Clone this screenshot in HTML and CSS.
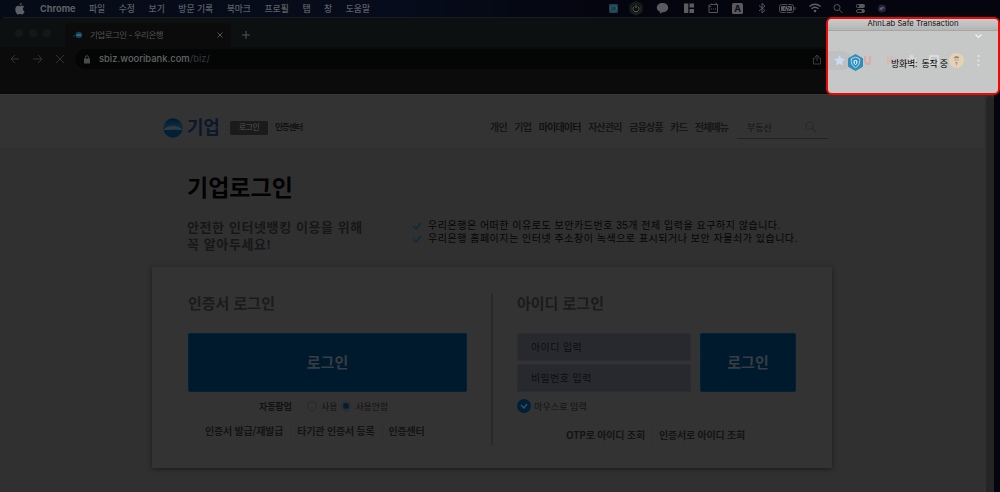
FILE: index.html
```html
<!DOCTYPE html>
<html lang="ko">
<head>
    <meta charset="UTF-8">
    <meta name="viewport" content="width=device-width, initial-scale=1.0">
    <title>기업로그인 - 우리은행</title>
    <link rel="stylesheet" href="styles.css">
</head>
<body>
    <div class="menubar">
        <svg class="apple" width="10" height="12" viewBox="0 0 10 12"><path d="M6.8 0C6.9 1.4 5.8 2.5 4.8 2.5 4.7 1.2 5.7.2 6.8 0ZM5 3.3C5.5 3.3 6.1 2.7 7.1 2.7 8 2.7 8.8 3.1 9.2 3.8 7.2 5 7.6 7.6 9.6 8.4 9 9.9 8.1 11.3 7.2 11.4 6.3 11.4 6 10.9 5 10.9 4 10.9 3.7 11.4 2.9 11.4 1.8 11.4.3 8.9.3 6.5.3 4.1 1.7 2.8 3.1 2.8 4 2.8 4.6 3.3 5 3.3Z"/></svg>
        <b>Chrome</b>
        <span>파일</span>
        <span>수정</span>
        <span>보기</span>
        <span>방문 기록</span>
        <span>북마크</span>
        <span>프로필</span>
        <span>탭</span>
        <span>창</span>
        <span>도움말</span>
        <svg class="status" width="288" height="17" viewBox="604 0 288 17">
            <rect x="609" y="4" width="9" height="9" rx="1" fill="#174050"/>
            <path d="M613.500 5.500l3 1v2.500q0 2-3 3-3-1-3-3V6.500z" fill="none" stroke="#3c5961"/>
            <path d="M636 1.500l6 3.400v6.800l-6 3.400-6-3.400V4.900z" fill="#080a0a" stroke="#252423"/>
            <circle cx="636" cy="8.500" r="4.800" fill="none" stroke="#26382b" stroke-width=".8"/>
            <path d="M634.300 6.300a3 3 0 1 0 3.400 0M636 4.800v3.500" fill="none" stroke="#656565"/>
            <path d="M662.500 3c3.300 0 5.700 2 5.700 4.700s-2.400 4.500-5.700 4.500l-2.800 1.500.3-2c-2-.8-3.200-2.200-3.200-4C656.800 5 659.200 3 662.500 3z"/>
            <path d="M684 3.500h4.300V13H684zM689.500 3.500h4.500v4h-4.500zM689.500 9h4.500v4h-4.500z"/>
            <path d="M711 4.500h6.500v8H709v-7m0 0l2-2m-2 2l2 1.500M715.500 3l2 1.500v2M711 9h1m1 0h1m1 0h1" fill="none" stroke="#565656"/>
            <rect x="732" y="3" width="11" height="11" rx="1.500"/>
            <text x="737.500" y="12" text-anchor="middle">A</text>
            <path d="M759 5.500l6 5-3 2.500V3.500l3 2.500-6 5" fill="none" stroke="#555560"/>
            <rect x="779.500" y="4.500" width="14" height="8" rx="2" fill="none" stroke="#4d4d52"/>
            <rect x="781" y="6" width="11" height="5" rx="1"/><path d="M795 7v3" stroke="#555"/>
            <path d="M788 4l-4 5h3l-1 4 4-5h-3z" fill="#888" stroke="#070711" stroke-width=".8"/>
            <path d="M809.500 6.500q5.500-4.500 11 0M811.500 8.700q3.500-3 7 0" fill="none" stroke="#606068" stroke-width="1.500"/><circle cx="815" cy="11" r="1.300"/>
            <circle cx="837" cy="7.500" r="3" fill="none" stroke="#55555a"/><path d="M839.500 10l3 3" stroke="#55555a"/>
            <rect x="856" y="4" width="9" height="4" rx="2"/><circle cx="858" cy="6" r="1.200" fill="#080811"/><rect x="856.500" y="9.500" width="8" height="3" rx="1.500" fill="none" stroke="#55555a"/><circle cx="863" cy="11" r="1.500"/>
            <circle cx="882" cy="8.500" r="4" fill="#252238"/><path d="M879 9.500q3-5 6-1-3-1-3 2z" fill="#66566b"/>
        </svg>
    </div>
    <div class="window">
        <div class="tabs">
            <div class="lights"><i></i><i></i><i></i></div>
            <div class="tab">
                <svg width="10" height="8" viewBox="0 0 10 8"><circle cx="5.800" cy="4" r="3.200" fill="#0a4263"/><path d="M2.800 4q3-2 6.200 0l-1 1H3.500z" fill="#52606a"/><circle cx="1.200" cy="5" r="1" fill="#063351"/></svg>
                <span>기업로그인 - 우리은행</span>
                <svg width="6" height="6" viewBox="0 0 6 6"><path d="M.5.5l5 5m0-5l-5 5" stroke="#555" fill="none"/></svg>
            </div>
            <svg class="plus" width="8" height="8" viewBox="0 0 8 8"><path d="M4 0v8M0 4h8" stroke="#555"/></svg>
        </div>
        <div class="toolbar">
            <svg width="60" height="12" viewBox="0 0 60 12"><path d="M9 6H1m4-4L1 6l4 4M23 6h9m-4-4l4 4-4 4M46 2l8 8m0-8l-8 8" stroke="#323434" fill="none"/></svg>
            <div class="address">
                <svg width="6" height="9" viewBox="0 0 6 9"><rect y="3.500" width="6" height="5" rx=".5" fill="#484b4b"/><path d="M1.300 4V2.500q0-1.700 1.700-1.700t1.700 1.700V4" fill="none" stroke="#484b4b"/></svg>
                <p>sbiz.wooribank.com<span>/biz/</span></p>
                <svg class="share" width="8" height="11" viewBox="0 0 8 11"><path d="M2.500 4H.5v6h7V4h-2M4 7V1M2 3l2-2 2 2" fill="none" stroke="#3a3a3a"/></svg>
            </div>
        </div>
        <div class="page">
            <header>
                <svg class="logo" width="20" height="20" viewBox="0 0 20 20">
                    <defs><linearGradient id="sky" x2="0" y2="1"><stop offset="0" stop-color="#001a30"/><stop offset=".4" stop-color="#0a2c40"/><stop offset=".6" stop-color="#00233a"/><stop offset="1" stop-color="#001f33"/></linearGradient></defs>
                    <circle cx="10" cy="10" r="9.700" fill="url(#sky)"/>
                    <path d="M.4 12Q3 8 10 8T19.600 12Q16 11.500 10 11.700T.4 12Z" fill="#343a3e"/>
                </svg>
                <h2>기업</h2>
                <span class="badge">로그인</span>
                <span class="center">인증센터</span>
                <nav>
                    <span>개인</span><span>기업</span><span class="strong">마이데이터</span><span>자산관리</span><span>금융상품</span><span>카드</span><span>전체메뉴</span>
                </nav>
                <div class="search">
                    <span>부동산</span>
                    <svg width="12" height="12" viewBox="0 0 12 12"><circle cx="4.500" cy="4.500" r="3.700" fill="none" stroke="#292929"/><path d="M7.300 7.300l4 4" stroke="#292929" stroke-width="1.500"/></svg>
                </div>
            </header>
            <main>
                <h1>기업로그인</h1>
                <div class="notice">
                    <h3>안전한 인터넷뱅킹 이용을 위해<br>꼭 알아두세요!</h3>
                    <ul>
                        <li><svg width="10" height="8" viewBox="0 0 10 8"><path d="M1 4l3 3 5-6"/></svg>우리은행은 어떠한 이유로도 보안카드번호 35개 전체 입력을 요구하지 않습니다.</li>
                        <li><svg width="10" height="8" viewBox="0 0 10 8"><path d="M1 4l3 3 5-6"/></svg>우리은행 홈페이지는 인터넷 주소창이 녹색으로 표시되거나 보안 자물쇠가 있습니다.</li>
                    </ul>
                </div>
                <div class="card">
                    <section class="cert">
                        <h4>인증서 로그인</h4>
                        <div class="btn">로그인</div>
                        <div class="popup-opt">
                            <b>자동팝업</b>
                            <i class="radio"></i><span>사용</span>
                            <i class="radio on"></i><span>사용안함</span>
                        </div>
                        <div class="links"><span>인증서 발급/재발급</span><span>타기관 인증서 등록</span><span>인증센터</span></div>
                    </section>
                    <section class="idlogin">
                        <h4>아이디 로그인</h4>
                        <div class="form">
                            <div class="fields">
                                <div class="field">아이디 입력</div>
                                <div class="field">비밀번호 입력</div>
                            </div>
                            <div class="btn">로그인</div>
                        </div>
                        <div class="mouse">
                            <svg width="14" height="14" viewBox="0 0 14 14"><circle cx="7" cy="7" r="7" fill="#001f38"/><path d="M4 6l3 3 3-4" fill="none" stroke="#465059" stroke-width="1.300"/></svg>
                            마우스로 입력
                        </div>
                        <div class="links"><span>OTP로 아이디 조회</span><span>인증서로 아이디 조회</span></div>
                    </section>
                </div>
            </main>
            <div class="scrollbar"></div>
        </div>
    </div>
    <div class="ahnlab">
        <div class="title">AhnLab Safe Transaction</div>
        <div class="body">
            <svg class="ghost" width="168" height="62" viewBox="828 30 168 62">
                <path d="M828 50h14a9 9 0 0 1 0 19h-14z" fill="#bfc0c0"/>
                <path d="M975.500 33.500l3 3 3-3" fill="none" stroke="#f2f2f2" stroke-width="1.200"/>
                <path d="M839.500 54l1.600 3.600 4 .4-3 2.600.9 3.900-3.500-2-3.500 2 .9-3.900-3-2.600 4-.4z" fill="#ccdaf3"/>
                <path d="M865 55v5q0 3 2.500 3t2.500-3v-5" fill="none" stroke="#dfa8a4" stroke-width="1.800"/>
                <path d="M888 55v8m5-8l-4 4 4 4" fill="none" stroke="#dcb6b2" stroke-width="1.500"/>
                <path d="M907 57h3a2 2 0 1 1 3 0h3v7h-9z" fill="#d8d9d9"/>
                <rect x="930" y="55" width="8" height="8" fill="none" stroke="#dadbdb" stroke-width="2"/>
                <circle cx="956.500" cy="59.500" r="7.500" fill="#e5d2b4"/>
                <circle cx="956.500" cy="58" r="2.500" fill="#d7b99c"/><path d="M953.500 57q3-4 6 0z" fill="#898b89"/><path d="M955 61h3l-1.500 4z" fill="#a6a8a6"/>
                <path d="M978.500 54v2m0 2.500v2m0 2.500v2" stroke="#e8e8e8" stroke-width="1.600"/>
            </svg>
            <svg class="shield" width="17" height="17" viewBox="0 0 16 17">
                <path d="M8 .5l7 4v8l-7 4-7-4v-8z" fill="#2d8ebb" stroke="#2d8ebb" stroke-linejoin="round"/>
                <path d="M8 3.200l4.200 1.500v3q0 4-4.200 6-4.200-2-4.200-6v-3z" fill="none" stroke="#b7d9e6"/>
                <path d="M8 5.700l2 .8v2Q10 10 8 11.200 6 10 6 8.500v-2z" fill="#c7dfe8"/><path d="M8 7v3" stroke="#2d8ebb"/>
            </svg>
            <span>방화벽:&nbsp; 동작 중</span>
        </div>
    </div>
</body>
</html>
```
FILE: styles.css
```css
*{
    margin: 0;
    padding: 0;
    box-sizing: border-box;
}
body{
    position: relative;
    width: 1000px;
    height: 492px;
    overflow: hidden;
    background-color: #05050e;
    font-family: "Liberation Sans", "Noto Sans CJK KR", sans-serif;
    color: #111;
}
svg{
    display: block;
    flex: none;
}
i{
    display: block;
}
.menubar{
    display: flex;
    align-items: center;
    height: 17px;
    padding-left: 15px;
    background-image: linear-gradient(to right, #050c17, #060c1b 40%, #05050f 60%);
    color: #5c6065;
    font: 500 8.8px/17px Inter, "Noto Sans CJK KR", sans-serif;
    white-space: nowrap;
}
.apple{
    fill: #5b6065;
    margin-right: 15px;
}
.menubar b{
    width: 49px;
    font-size: 9.2px;
}
.menubar span{
    margin-right: 13.6px;
}
.status{
    margin-left: auto;
    margin-right: 108px;
    fill: #5a5a5f;
}
.status text{
    font: bold 9px Inter, sans-serif;
    fill: #0b0b14;
}
.window{
    width: 994px;
    height: 475px;
    border-top: 1px solid #1a1c1d;
    border-radius: 5px 0 0 0;
    background-color: #0b0b0b;
    overflow: hidden;
}
.tabs{
    display: flex;
    align-items: center;
    height: 29px;
    padding-left: 15px;
    background-color: #0d1010;
}
.lights{
    display: flex;
    gap: 6px;
    width: 50px;
}
.lights i{
    width: 8px;
    height: 8px;
    border-radius: 50%;
    background-color: #151818;
}
.tab{
    display: flex;
    align-items: center;
    align-self: flex-end;
    width: 166px;
    height: 24px;
    padding: 0 8px 0 8px;
    border-radius: 5px 5px 0 0;
    background-color: #0b0b0b;
    color: #515353;
    font: 8.5px/20px Inter, "Noto Sans CJK KR", sans-serif;
    letter-spacing: -.5px;
}
.tab span{
    flex: 1;
    margin-left: 7px;
    white-space: nowrap;
}
.plus{
    margin: 5px 0 0 11px;
}
.toolbar{
    display: flex;
    align-items: center;
    height: 24px;
    padding-left: 10px;
}
.address{
    display: flex;
    align-items: center;
    width: 780px;
    height: 20px;
    margin-left: 5px;
    padding: 0 9px;
    border-radius: 10px;
    background-color: #040606;
    color: #626565;
    font: 500 9.4px/20px Inter, sans-serif;
}
.address p{
    flex: 1;
    margin-left: 9px;
}
.address p span{
    color: #303333;
}
.share{
    margin-right: 25px;
}
.page{
    display: grid;
    grid-template-columns: 984px 10px;
    grid-template-rows: 54px 1fr;
    height: 398px;
    margin-top: 23px;
    background-color: #303030;
    border-top: 1px solid #373737;
}
header{
    display: flex;
    align-items: center;
    padding: 12px 0 0 163px;
    background-color: #333;
    border-bottom: 1px solid #2e2e2e;
    white-space: nowrap;
}
h2{
    width: 43px;
    margin-left: 4px;
    font-size: 18px;
    line-height: 20px;
    letter-spacing: -.3px;
    color: #0b172b;
}
.badge{
    width: 38px;
    height: 14px;
    border-radius: 2px;
    background-color: #1b1b1b;
    color: #515151;
    font-size: 8px;
    line-height: 13px;
    text-align: center;
    letter-spacing: -.5px;
}
.center{
    width: 215px;
    margin: -3px 0 0 7px;
    font-size: 8.5px;
    font-weight: bold;
    letter-spacing: -1px;
}
nav{
    display: flex;
    gap: 7.5px;
    width: 247px;
    margin-top: -2px;
    color: #161616;
    font-size: 10px;
    font-weight: bold;
    letter-spacing: -.8px;
}
nav .strong{
    color: #111;
}
.search{
    display: flex;
    align-items: center;
    justify-content: space-between;
    width: 91px;
    height: 23px;
    padding: 0 11px 0 10px;
    border-bottom: 1px solid #222;
    color: #141414;
    font-size: 9px;
}
main{
    grid-row: 2;
    padding: 21px 0 0 152px;
}
h1{
    margin-left: 35px;
    font-size: 23px;
    line-height: 36px;
    color: #020202;
}
.notice{
    display: flex;
    height: 61px;
    padding: 14px 0 0 35px;
    white-space: nowrap;
}
h3{
    width: 225px;
    font-size: 13px;
    line-height: 16.5px;
    font-weight: bold;
    letter-spacing: .6px;
    color: #171717;
}
ul{
    margin-top: -1px;
    list-style: none;
    font-size: 10px;
    line-height: 13px;
    letter-spacing: .52px;
    color: #050505;
}
li{
    display: flex;
    align-items: center;
}
li svg{
    margin-right: 6px;
    fill: none;
    stroke: #092a40;
    stroke-width: 1.4;
}
.card{
    display: flex;
    width: 680px;
    height: 201px;
    padding: 26px 0 0 36px;
    background-color: #333;
    box-shadow: 0 1px 4px #191919;
    white-space: nowrap;
}
.cert{
    width: 305px;
    height: 152px;
    padding-right: 24px;
    border-right: 2px solid #292929;
}
h4{
    height: 40px;
    font-size: 15px;
    line-height: 22px;
    font-weight: bold;
    color: #1b1b1b;
}
.btn{
    height: 59px;
    border: 1px solid #032037;
    border-radius: 2px;
    background-color: #001a2d;
    color: #363d43;
    font-size: 15px;
    font-weight: bold;
    line-height: 57px;
    text-align: center;
}
.popup-opt{
    display: flex;
    align-items: center;
    height: 28px;
    padding-left: 71px;
    font-size: 9px;
    letter-spacing: -.1px;
    color: #121212;
}
.popup-opt b{
    width: 48px;
}
.popup-opt span{
    margin: 0 4px;
}
.radio{
    width: 10px;
    height: 10px;
    border: 1px solid #292929;
    border-radius: 50%;
}
.radio.on{
    padding: 1px;
    background-color: #001e39;
    background-clip: content-box;
}
.links{
    display: flex;
    font-family: "Noto Sans CJK KR", sans-serif;
    font-size: 10px;
    line-height: 22px;
    font-weight: bold;
    letter-spacing: -.2px;
    color: #141414;
}
.cert .links{
    margin-left: 17px;
}
.links span + span{
    margin-left: 7px;
    padding-left: 6px;
    border-left: 1px solid #303030;
}
.idlogin{
    width: 279px;
    margin-left: 24px;
}
.form{
    display: flex;
    gap: 9px;
}
.fields{
    display: grid;
    gap: 3px;
    width: 174px;
    height: 59px;
}
.field{
    height: 28px;
    border: 1px solid #2d2d2f;
    background-color: #28292e;
    padding-left: 13px;
    font-size: 10px;
    line-height: 27px;
    letter-spacing: .4px;
    color: #0d0d0f;
}
.form .btn{
    width: 96px;
}
.mouse{
    display: flex;
    align-items: center;
    gap: 3px;
    height: 28px;
    font-size: 9px;
    letter-spacing: .1px;
    color: #121212;
}
.idlogin .links{
    margin: 4px 0 0 49px;
}
.scrollbar{
    grid-row: 1 / 3;
    grid-column: 2;
    margin: 1px 0 0 2px;
    border-radius: 4px 4px 0 0;
    background-color: #252525;
}
/* floats above the browser window */
.ahnlab{
    position: absolute;
    top: 17px;
    right: 0;
    width: 174px;
    height: 78px;
    border: 2px solid #f20505;
    border-radius: 6px;
    background-color: #c6c7c7;
    overflow: hidden;
}
.ahnlab .title{
    height: 12px;
    background-image: linear-gradient(#cbcbcb, #b3b4b4);
    border-bottom: 1px solid #a4a5a5;
    font: 7.7px/10px Inter, sans-serif;
    text-align: center;
    color: #111;
}
.ahnlab .body{
    display: grid;
    grid-template-columns: 19px 44px 1fr;
    align-items: center;
    height: 62px;
}
.ghost{
    grid-row: 1;
    grid-column: 1 / 4;
}
.shield{
    grid-row: 1;
    grid-column: 2;
}
.ahnlab .body span{
    grid-row: 1;
    grid-column: 3;
    padding-top: 2px;
    font-size: 9px;
    letter-spacing: -.3px;
    color: #000;
}
```
